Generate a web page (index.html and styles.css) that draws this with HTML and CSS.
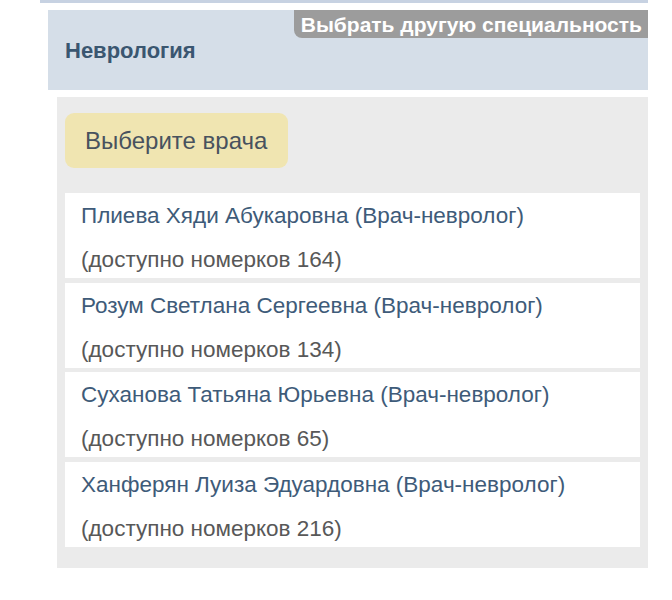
FILE: index.html
```html
<!DOCTYPE html>
<html lang="ru">
<head>
<meta charset="utf-8">
<link rel="stylesheet" href="styles.css">
</head>
<body>
<div class="topbar"></div>
<div class="spec">
  <h2 class="spec-title">Неврология</h2>
  <a class="change-btn">Выбрать другую специальность</a>
</div>
<div class="panel">
  <div class="prompt">Выберите врача</div>
  <ul class="doctors">
    <li class="doctor"><div class="name">Плиева Хяди Абукаровна (Врач-невролог)</div><div class="count">(доступно номерков 164)</div></li>
    <li class="doctor"><div class="name">Розум Светлана Сергеевна (Врач-невролог)</div><div class="count">(доступно номерков 134)</div></li>
    <li class="doctor"><div class="name">Суханова Татьяна Юрьевна (Врач-невролог)</div><div class="count">(доступно номерков 65)</div></li>
    <li class="doctor"><div class="name">Ханферян Луиза Эдуардовна (Врач-невролог)</div><div class="count">(доступно номерков 216)</div></li>
  </ul>
</div>
</body>
</html>
```
FILE: styles.css
```css
html, body { margin: 0; padding: 0; background: #fff; }
body { font-family: "Liberation Sans", Arial, sans-serif; }
.topbar { margin-left: 40px; width: 608px; height: 3px; background: #c7d2e2; }
.spec {
  position: relative;
  margin: 7px 0 0 48px;
  width: 600px;
  height: 80px;
  background: #d5dee8;
  box-sizing: border-box;
  padding: 28px 17px 0;
}
.spec-title { margin: 0; font-size: 22px; font-weight: bold; color: #3a5670; line-height: 26px; }
.change-btn {
  position: absolute;
  right: 0; top: 0;
  background: #9c9c9c;
  color: #fff;
  font-weight: bold;
  font-size: 21px;
  line-height: 27px;
  padding: 1px 6px 0 7px;
  border-bottom-left-radius: 8px;
}
.panel {
  margin: 7px 0 0 57px;
  width: 591px;
  background: #ebebeb;
  box-sizing: border-box;
  padding: 16px 8px 21px 8px;
}
.prompt {
  display: inline-block;
  background: #f0e5b1;
  color: #48525e;
  font-size: 24px;
  line-height: 55px;
  padding: 0 21px 0 20px;
  border-radius: 9px;
}
.doctors { list-style: none; margin: 25px 0 0; padding: 0; display: flex; flex-direction: column; gap: 4.5px; }
.doctor { background: #fff; padding: 0 16px; height: 85px; box-sizing: border-box; }
.name { color: #3e5b79; font-size: 22.5px; line-height: 45px; }
.count { color: #585858; font-size: 22.5px; line-height: 35px; padding-top: 4px; }
```
